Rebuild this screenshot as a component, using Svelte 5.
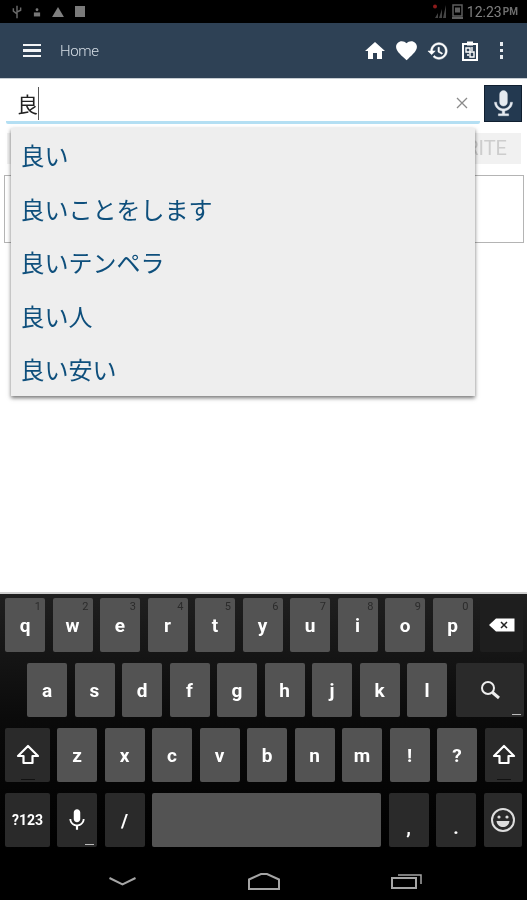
<script>
  const suggestions = ["良い", "良いことをします", "良いテンペラ", "良い人", "良い安い"];

  const row1 = [
    ["q", "1"], ["w", "2"], ["e", "3"], ["r", "4"], ["t", "5"],
    ["y", "6"], ["u", "7"], ["i", "8"], ["o", "9"], ["p", "0"],
  ];
  const row2 = ["a", "s", "d", "f", "g", "h", "j", "k", "l"];
  const row3 = ["z", "x", "c", "v", "b", "n", "m", "!", "?"];
</script>

{#snippet shift()}
  <svg width="24" height="22" viewBox="0 0 24 22">
    <path d="M12 2 L22 12 H16.500 V19 H7.500 V12 H2 Z" fill="none" stroke="#fff" stroke-width="2.200" stroke-linejoin="round" />
  </svg>
  <span class="shift-mark"></span>
{/snippet}

<div class="screen">
  <div class="status">
    <div class="status-left">
      <svg width="10" height="16" viewBox="0 0 11 16">
        <path d="M5.500 1v14M1.500 4v3l4 3M9.500 3v3l-4 2" fill="none" stroke="#6a6a6a" stroke-width="1.600" />
      </svg>
      <svg width="8" height="10" viewBox="0 0 9 11">
        <circle cx="4.500" cy="3" r="1.600" fill="#777" />
        <rect x="1" y="6" width="7" height="4.500" fill="#777" />
      </svg>
      <svg width="12" height="10" viewBox="0 0 13 11"><path d="M6.500 0 13 11H0Z" fill="#808080" /></svg>
      <span class="sq"></span>
    </div>
    <div class="status-right">
      <svg width="16" height="15" viewBox="0 0 16 15">
        <path d="M14 1v13h-3zM10 5v9H7zM6 9v5H3z" fill="#444" />
        <circle cx="3" cy="2.500" r="2" fill="#8c1b1b" />
      </svg>
      <svg class="sim" width="11" height="15" viewBox="0 0 11 15">
        <rect x="1" y="1" width="9" height="11" fill="none" stroke="#5e5e5e" stroke-width="1.500" />
        <rect x="3" y="3.500" width="5" height="5" fill="#5e5e5e" />
        <rect x="0" y="13" width="11" height="2" fill="#5e5e5e" />
      </svg>
      <span class="time">12:23</span>
      <span class="ampm">PM</span>
    </div>
  </div>

  <header class="nav">
    <div class="burger"><span></span><span></span><span></span></div>
    <div class="title">Home</div>
    <div class="nav-icons">
      <div class="slot"><svg width="24" height="24" viewBox="0 0 24 24"><path d="M10 20v-6h4v6h5v-8h3L12 3 2 12h3v8z" fill="#fff" /></svg></div>
      <div class="slot"><svg width="25" height="25" viewBox="0 0 24 24"><path d="M12 21.350l-1.450-1.320C5.400 15.360 2 12.280 2 8.500 2 5.420 4.420 3 7.500 3c1.740 0 3.410.81 4.500 2.090C13.090 3.810 14.760 3 16.500 3 19.580 3 22 5.420 22 8.500c0 3.780-3.400 6.860-8.550 11.540L12 21.350z" fill="#fff" /></svg></div>
      <div class="slot"><svg width="22" height="22" viewBox="0 0 24 24"><path d="M13 3c-4.970 0-9 4.030-9 9H1l3.890 3.890.07.14L9 12H6c0-3.870 3.130-7 7-7s7 3.130 7 7-3.130 7-7 7c-1.930 0-3.680-.79-4.940-2.060l-1.420 1.420C8.270 19.990 10.510 21 13 21c4.970 0 9-4.030 9-9s-4.030-9-9-9zm-1 5v5l4.280 2.540.72-1.210-3.500-2.080V8H12z" fill="#fff" stroke="#fff" stroke-width="0.600" /></svg></div>
      <div class="slot"><svg width="18" height="20" viewBox="0 0 18 20">
        <rect x="2" y="3" width="14" height="16" fill="none" stroke="#fff" stroke-width="2" />
        <rect x="6" y="0.500" width="6" height="4" fill="#fff" />
        <path d="M5 7h4v4H5zM9 11h4v5H9zM11 6v4M6 14h2" fill="none" stroke="#fff" stroke-width="1.400" />
      </svg></div>
      <div class="slot"><div class="dots"><span></span><span></span><span></span></div></div>
    </div>
  </header>
  <div class="nav-edge"></div>

  <div class="search-row">
    <div class="input">
      <span class="query">良</span><span class="caret"></span>
      <svg class="clear" width="12" height="12" viewBox="0 0 12 12">
        <path d="M1 1l10 10M11 1L1 11" stroke="#8a8a8a" stroke-width="1.300" />
      </svg>
    </div>
    <button class="mic">
      <svg width="31" height="31" viewBox="0 0 24 24">
        <path d="M12 14c1.660 0 3-1.340 3-3V5c0-1.660-1.340-3-3-3S9 3.340 9 5v6c0 1.660 1.340 3 3 3zm5.300-3c0 3-2.540 5.100-5.300 5.100S6.700 14 6.700 11H5c0 3.410 2.720 6.230 6 6.720V20H8v1.500h8V20h-3v-2.280c3.280-.48 6-3.300 6-6.720h-1.700z" fill="#e6ebf0" stroke="#e6ebf0" stroke-width="0.300" />
      </svg>
    </button>
  </div>

  <div class="content">
    <div class="tabs">FAVORITE</div>
    <div class="box"></div>
  </div>

  <div class="menu">
    {#each suggestions as s}
      <div class="item">{s}</div>
    {/each}
  </div>

  <div class="keyboard">
    <div class="kb-row">
      {#each row1 as [k, n]}
        <div class="key"><i>{n}</i>{k}</div>
      {/each}
      <div class="key dark back">
        <svg width="26" height="14" viewBox="0 0 26 14">
          <path d="M0 7 7 0.500H25.500V13.500H7Z" fill="#fff" />
          <path d="M12 4l6 6M18 4l-6 6" stroke="#222" stroke-width="1.500" />
        </svg>
      </div>
    </div>
    <div class="kb-row second">
      {#each row2 as k}
        <div class="key">{k}</div>
      {/each}
      <div class="key dark go">
        <svg width="22" height="22" viewBox="0 0 22 22">
          <circle cx="9" cy="9" r="6" fill="none" stroke="#eee" stroke-width="2" />
          <path d="M13.500 13.500 20 19" stroke="#eee" stroke-width="3" />
        </svg>
        <span class="long-mark"></span>
      </div>
    </div>
    <div class="kb-row">
      <div class="key dark wide">{@render shift()}</div>
      {#each row3 as k}
        <div class="key">{k}</div>
      {/each}
      <div class="key dark side">{@render shift()}</div>
    </div>
    <div class="kb-row">
      <div class="key dark wide sym">?123</div>
      <div class="key dark">
        <svg width="26" height="26" viewBox="0 0 24 24">
          <path d="M12 14c1.660 0 3-1.340 3-3V5c0-1.660-1.340-3-3-3S9 3.340 9 5v6c0 1.660 1.340 3 3 3zm5.300-3c0 3-2.540 5.100-5.300 5.100S6.700 14 6.700 11H5c0 3.410 2.720 6.230 6 6.720V21h2v-3.280c3.280-.48 6-3.300 6-6.720h-1.700z" fill="#fff" />
        </svg>
        <span class="long-mark"></span>
      </div>
      <div class="key dark">/</div>
      <div class="key space"></div>
      <div class="key dark low">,</div>
      <div class="key dark low">.</div>
      <div class="key dark side">
        <svg width="26" height="26" viewBox="0 0 26 26">
          <circle cx="13" cy="13" r="11" fill="none" stroke="#ddd" stroke-width="2" />
          <circle cx="9" cy="10" r="1.600" fill="#ddd" />
          <circle cx="17" cy="10" r="1.600" fill="#ddd" />
          <path d="M6.500 14H19.500C19 18 16 20 13 20S7 18 6.500 14Z" fill="#ddd" />
        </svg>
      </div>
    </div>
  </div>

  <div class="softkeys">
    <svg width="27" height="9" viewBox="0 0 27 9">
      <path d="M0.500 1 13.500 7.500 26.500 1" fill="none" stroke="#a5a5a5" stroke-width="2" />
    </svg>
    <svg width="32" height="17" viewBox="0 0 32 17">
      <path d="M1 16V6.500L13 1H19L31 6.500V16Z" fill="none" stroke="#a5a5a5" stroke-width="2" />
    </svg>
    <svg width="31" height="16" viewBox="0 0 31 16">
      <rect x="1" y="5" width="24" height="10" fill="none" stroke="#a5a5a5" stroke-width="2" />
      <path d="M7 2H30V11" fill="none" stroke="#a5a5a5" stroke-width="1.500" />
    </svg>
  </div>
</div>

<style>
  :global(body) {
    margin: 0;
    background: #fff;
  }

  .screen {
    position: relative;
    width: 527px;
    height: 900px;
    overflow: hidden;
    display: flex;
    flex-direction: column;
    background: #fff;
    font-family: "Roboto", "Noto Sans CJK JP", sans-serif;
    filter: blur(0.5px);
  }

  .status {
    height: 23px;
    flex: none;
    background: #000;
    display: flex;
    justify-content: space-between;
    align-items: center;
    padding: 0 9px 0 12px;
    box-sizing: border-box;
  }

  .status-left,
  .status-right {
    display: flex;
    align-items: center;
  }

  .status-left {
    gap: 11px;
  }

  .sq {
    width: 10px;
    height: 11px;
    background: #7a7a7a;
  }

  .sim {
    margin-left: 4px;
  }

  .time {
    margin-left: 4px;
    color: #7f7f7f;
    font-size: 14px;
    width: 36px;
  }

  .ampm {
    color: #6e6e6e;
    font-size: 10px;
    font-weight: 700;
  }

  .nav {
    height: 55px;
    flex: none;
    background: #2e4155;
    display: flex;
    align-items: center;
    padding: 0 10px 0 23px;
    box-sizing: border-box;
  }

  .nav-edge {
    height: 1px;
    flex: none;
    background: #c6ccd2;
  }

  .burger {
    width: 18px;
    display: flex;
    flex-direction: column;
    gap: 3px;
  }

  .burger span {
    height: 2.500px;
    background: #f2f4f6;
  }

  .title {
    margin-left: 19px;
    color: #d6dee6;
    font-size: 15px;
    font-weight: 300;
    letter-spacing: -0.4px;
  }

  .nav-icons {
    margin-left: auto;
    display: flex;
    align-items: center;
  }

  .slot {
    width: 31.500px;
    display: flex;
    justify-content: center;
    align-items: center;
  }

  .dots {
    display: flex;
    flex-direction: column;
    gap: 3px;
  }

  .dots span {
    width: 3.500px;
    height: 3.500px;
    background: #e8ecf0;
  }

  .search-row {
    height: 45px;
    flex: none;
    display: flex;
    justify-content: space-between;
    padding: 6px 5px 0 6px;
    box-sizing: border-box;
  }

  .input {
    width: 474px;
    height: 39px;
    flex: none;
    border-bottom: 3px solid #b4dff3;
    border-radius: 0 0 2px 2px;
    box-sizing: border-box;
    display: flex;
    align-items: center;
    padding-left: 11px;
  }

  .query {
    font-size: 21px;
    color: #222;
  }

  .caret {
    width: 1px;
    height: 33px;
    background: #555;
  }

  .clear {
    margin-left: auto;
    margin-right: 12px;
  }

  .mic {
    width: 38px;
    height: 37px;
    padding: 0;
    border: 1.500px solid #101f30;
    box-sizing: border-box;
    background: #233950;
    display: flex;
    align-items: center;
    justify-content: center;
  }

  .content {
    flex: 1;
    padding: 9px 3px 0 4px;
  }

  .tabs {
    height: 31px;
    margin: 0 3px;
    background: #f1f1f1;
    color: #cdcdcd;
    font-size: 20px;
    line-height: 31px;
    text-align: right;
    padding-right: 14px;
  }

  .box {
    height: 68px;
    margin-top: 11px;
    border: 1.500px solid #b4b4b4;
    box-sizing: border-box;
  }

  .menu {
    position: absolute;
    left: 10.500px;
    top: 128px;
    width: 464.500px;
    height: 268px;
    background: #eee;
    box-shadow: 0 2px 4px rgba(0, 0, 0, 0.55);
    display: flex;
    flex-direction: column;
    padding: 0 0 0 10px;
    box-sizing: border-box;
  }

  .item {
    height: 53.600px;
    line-height: 53px;
    font-size: 24px;
    color: #0e4f7c;
    font-family: "Noto Sans CJK JP", sans-serif;
  }

  .keyboard {
    height: 258px;
    flex: none;
    border-top: 2px solid #cfcfcf;
    box-sizing: border-box;
    background: linear-gradient(#1f1f1f, #0a0a0a 50%, #000);
    padding: 4px 5px 0;
    display: flex;
    flex-direction: column;
    gap: 11px;
  }

  .kb-row {
    display: flex;
    gap: 7.500px;
    height: 54px;
  }

  .kb-row.second {
    padding-left: 22px;
  }

  .key {
    position: relative;
    width: 40px;
    flex: none;
    background: #535353;
    border-radius: 2px;
    display: flex;
    align-items: center;
    justify-content: center;
    color: #fff;
    font-size: 19px;
    font-weight: 700;
    box-sizing: border-box;
  }

  .key i {
    position: absolute;
    top: 2px;
    right: 4px;
    font-style: normal;
    font-size: 11px;
    font-weight: 400;
    color: #2b2b2b;
  }

  .key.dark {
    background: #2a2a2a;
  }

  .key.back {
    background: #1e1e1e;
    width: 43px;
  }

  .key.go {
    width: 68px;
    margin-left: 1px;
  }

  .key.wide {
    width: 45px;
    margin-right: -0.5px;
  }

  .key.side {
    width: 38px;
  }

  .key.sym {
    font-size: 14px;
  }

  .key.space {
    width: 229px;
  }

  .key.low {
    align-items: flex-end;
    padding-bottom: 8px;
  }

  .shift-mark {
    position: absolute;
    bottom: 2px;
    left: 50%;
    width: 14px;
    margin-left: -7px;
    height: 1.500px;
    background: #111;
  }

  .long-mark {
    position: absolute;
    bottom: 2px;
    right: 3px;
    width: 9px;
    height: 1.500px;
    background: #bbb;
  }

  .softkeys {
    height: 50px;
    flex: none;
    background: #000;
    display: flex;
    align-items: center;
    justify-content: space-between;
    padding: 12px 105px 0 109px;
    box-sizing: border-box;
  }
</style>
